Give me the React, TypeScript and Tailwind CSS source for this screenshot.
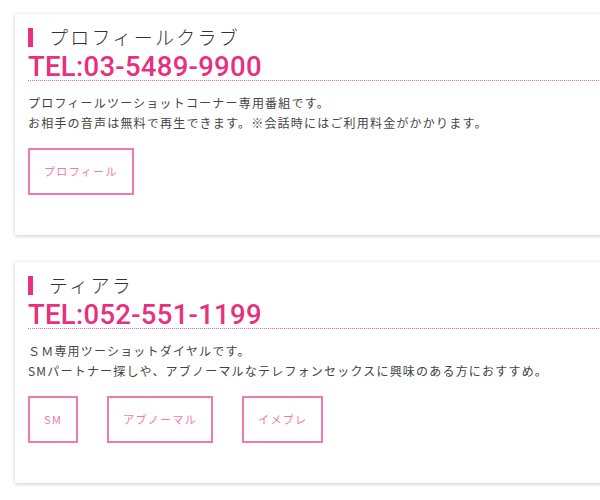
const clubs = [
  {
    name: 'プロフィールクラブ',
    tel: 'TEL:03-5489-9900',
    lines: [
      'プロフィールツーショットコーナー専用番組です。',
      'お相手の音声は無料で再生できます。※会話時にはご利用料金がかかります。',
    ],
    tags: ['プロフィール'],
  },
  {
    name: 'ティアラ',
    tel: 'TEL:052-551-1199',
    lines: [
      'ＳＭ専用ツーショットダイヤルです。',
      'SMパートナー探しや、アブノーマルなテレフォンセックスに興味のある方におすすめ。',
    ],
    tags: ['SM', 'アブノーマル', 'イメプレ'],
  },
]

function ClubCard({ club }: { club: (typeof clubs)[number] }) {
  return (
    <div className="ml-[15px] w-[620px] bg-white pl-[13px] pt-[12px] pb-[40px] shadow-[0_1px_4px_rgba(0,0,0,0.22)]">
      <h2 className="flex items-center h-[22px] text-[19px] leading-[22px] tracking-[0.12em] text-[#333] font-light">
        <span className="mr-[16px] h-[19px] w-[5px] bg-[#e8307e]" />
        {club.name}
      </h2>
      <p className="mt-[6px] border-b border-dotted border-[#ee6aa2] text-[27.5px] leading-[26px] font-medium tracking-[0.01em] text-[#e8307e] font-['Roboto','Liberation_Sans',sans-serif]">
        {club.tel}
      </p>
      <div className="mt-[12px] text-[12px] leading-[20px] tracking-[0.1em] text-[#444]">
        {club.lines.map((l) => (
          <p key={l}>{l}</p>
        ))}
      </div>
      <div className="mt-[15px] flex gap-[29px]">
        {club.tags.map((t) => (
          <span
            key={t}
            className="flex h-[47px] items-center border-2 border-[#f27aa9] px-[14px] text-[11px] tracking-[0.12em] text-[#f07aa8]"
          >
            {t}
          </span>
        ))}
      </div>
    </div>
  )
}

export default function App() {
  return (
    <div className="h-[500px] w-[600px] overflow-hidden bg-white pt-[14px] font-['Noto_Sans_CJK_JP','Noto_Sans',sans-serif]">
      <div className="flex flex-col gap-[27px]">
        {clubs.map((c) => (
          <ClubCard key={c.name} club={c} />
        ))}
      </div>
    </div>
  )
}
